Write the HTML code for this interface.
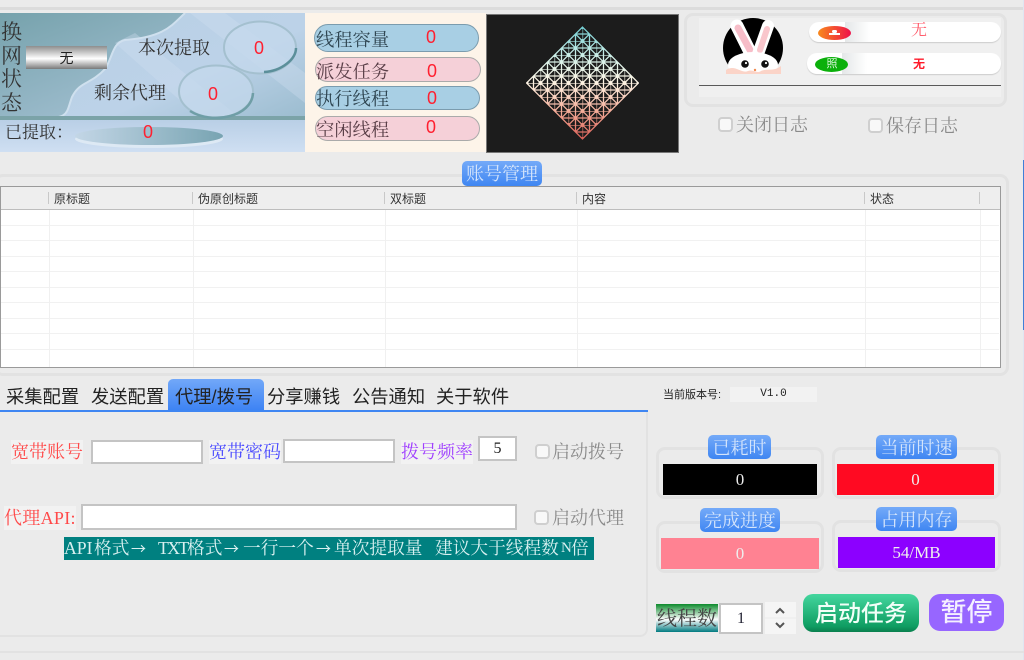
<!DOCTYPE html>
<html><head><meta charset="utf-8"><style>
*{box-sizing:border-box}
html,body{margin:0;padding:0}
body{width:1024px;height:660px;overflow:hidden;background:#ebebeb;position:relative;font-family:"Liberation Serif","Noto Serif CJK SC",serif}
.a{position:absolute;white-space:nowrap}
.s{font-family:"Liberation Sans","Noto Sans CJK SC",sans-serif}
.l{line-height:24px;height:24px;font-size:18px;color:#333}
.p{font-size:18.3px}
.r{color:#ff2030;font-size:18px;font-family:"Liberation Sans",sans-serif;text-align:center;line-height:24px;height:24px}
.pill{position:absolute;border-radius:14px;border:1px solid #8aa}
.gb{position:absolute;border:3px solid #e2e2e2;border-radius:9px}
.tt{position:absolute;background:linear-gradient(#74aaf8,#3f86f2);border-radius:5px;color:#d4e4fb;font-size:18px;text-align:center;height:24px;line-height:26px}
.inp{position:absolute;background:#fff;border:2px solid #c4c4c4}
.v{position:absolute;color:#eee;text-align:center;font-size:17px;line-height:31px;height:31px}
.cb{position:absolute;width:15px;height:15px;border:2px solid #cfcfcf;border-radius:4px;background:#f8f8f8}
.g{color:#8a8a8a;font-size:18px;line-height:24px;height:24px}
.tab{position:absolute;top:385px;font-size:18.3px;line-height:24px;height:24px;color:#222;font-family:"Liberation Sans","Noto Sans CJK SC",sans-serif}
.cell{position:absolute;top:186px;height:182px;width:1px;background:#f0f0f0}
.sep{position:absolute;top:192px;height:12px;width:1px;background:#c8c8c8}
.row{position:absolute;left:1px;width:998px;height:1px;background:#f1f1f1}
.th{position:absolute;top:191px;font-size:12px;line-height:16px;color:#333;font-family:"Liberation Sans","Noto Sans CJK SC",sans-serif}
.lb{position:absolute;font-size:18px;line-height:24px;background:#f2f2f2;white-space:nowrap}
.bn{position:absolute;top:0;line-height:23px;font-size:17.7px;color:#d8f0f0;white-space:nowrap}
.ar{font-family:"Noto Sans CJK SC",sans-serif;font-size:15px}
</style></head><body>

<!-- outer frame lines -->
<div class="a" style="left:0;top:7px;width:1024px;height:3px;background:#dcdcdc"></div>
<div class="a" style="left:1023px;top:0;width:1px;height:660px;background:#dfe6f2"></div>
<div class="a" style="left:1023px;top:160px;width:1px;height:170px;background:#3f7fd8"></div>
<div class="a" style="left:0;top:651px;width:1024px;height:2px;background:#e2e2e2"></div>

<!-- top-left panel -->
<svg class="a" style="left:0;top:13px" width="305" height="139" viewBox="0 0 305 139">
<defs>
<linearGradient id="bg1" x1="0" y1="0" x2="1" y2="1"><stop offset="0" stop-color="#b8cfe4"/><stop offset=".55" stop-color="#bcd2e8"/><stop offset="1" stop-color="#8fb4c6"/></linearGradient>
<linearGradient id="bg2" x1="0" y1="0" x2=".7" y2="1"><stop offset="0" stop-color="#76a2ac"/><stop offset="1" stop-color="#a3c0d2"/></linearGradient>
<linearGradient id="bg3" x1="0" y1="0" x2="0" y2="1"><stop offset="0" stop-color="#b9cfe6"/><stop offset="1" stop-color="#cfdff2"/></linearGradient>
<linearGradient id="el" x1="0" y1="0" x2="1" y2="0"><stop offset="0" stop-color="#c3d6e6"/><stop offset="1" stop-color="#78a4b2"/></linearGradient>
</defs>
<rect width="305" height="139" fill="url(#bg1)"/>
<path d="M185 0C172 12 165 24 125 27C112 30 113 44 105 56C90 72 80 68 72 84C66 100 70 108 40 105L0 105V0Z" fill="url(#bg2)"/>
<path d="M185 0C172 12 165 24 125 27C112 30 113 44 105 56C90 72 80 68 72 84C66 100 70 106 40 105" fill="none" stroke="#cfe0ee" stroke-width="2"/>
<path d="M190 0L305 90V60L225 0ZM115 30L200 105H240L135 20Z" fill="#d0e0f2" opacity=".35"/>
<rect y="103" width="305" height="4" fill="#7ba3a8"/>
<rect y="107" width="305" height="32" fill="url(#bg3)"/>
<ellipse cx="260" cy="34.5" rx="36" ry="26" fill="#c4d8ec" fill-opacity=".75" stroke="#a4c0cf" stroke-width="2"/>
<path d="M264 59C282 58 296 46 296 35" fill="none" stroke="#5b8f9a" stroke-width="2.5"/>
<ellipse cx="216" cy="78.5" rx="37" ry="26" fill="#c4d8ec" fill-opacity=".75" stroke="#a4c0cf" stroke-width="2"/>
<path d="M190 98C212 112 252 104 253 80" fill="none" stroke="#6f9ea6" stroke-width="2.5"/>
<ellipse cx="149" cy="126" rx="74" ry="9" fill="#dde9f4"/>
<ellipse cx="149" cy="123" rx="74" ry="9" fill="url(#el)"/>
</svg>
<div class="a" style="left:1px;top:21px;width:22px;font-size:21px;line-height:23.5px;color:#333;white-space:normal">换网状态</div>
<div class="a s" style="left:26px;top:46px;width:81px;height:23px;background:linear-gradient(#8d8d8d,#fff 55%,#7a7a7a);color:#222;font-size:14px;line-height:24px;text-align:center">无</div>
<div class="a l" style="left:138px;top:36px">本次提取</div>
<div class="a r" style="left:239px;top:36px;width:40px">0</div>
<div class="a l" style="left:94px;top:81px">剩余代理</div>
<div class="a r" style="left:193px;top:82px;width:40px">0</div>
<div class="a" style="left:5px;top:121px;font-size:17px;line-height:24px;color:#333">已提取：</div>
<div class="a r" style="left:128px;top:120px;width:40px">0</div>

<!-- status panel -->
<div class="a" style="left:305px;top:13px;width:181px;height:139px;background:#fdf4e9"></div>
<div class="pill" style="left:314px;top:24px;width:165px;height:28px;background:#a8cfe4;border-color:#7b9cae"></div>
<div class="pill" style="left:315px;top:57px;width:166px;height:25px;background:#f5d0d8;border-color:#aaa"></div>
<div class="pill" style="left:315px;top:86px;width:165px;height:24px;background:#a8cfe4;border-color:#7b9cae"></div>
<div class="pill" style="left:315px;top:116px;width:165px;height:25px;background:#f5d0d8;border-color:#aaa"></div>
<div class="a l p" style="left:316px;top:28px;color:#2f4652">线程容量</div><div class="a r" style="left:411px;top:25px;width:40px">0</div>
<div class="a l p" style="left:316px;top:60px;color:#5a3f48">派发任务</div><div class="a r" style="left:412px;top:59px;width:40px">0</div>
<div class="a l p" style="left:316px;top:87px;color:#2f4652">执行线程</div><div class="a r" style="left:412px;top:86px;width:40px">0</div>
<div class="a l p" style="left:316px;top:118px;color:#5a3f48">空闲线程</div><div class="a r" style="left:411px;top:115px;width:40px">0</div>

<!-- diamond -->
<svg class="a" style="left:486px;top:14px" width="193" height="139" viewBox="0 0 193 139">
<defs>
<linearGradient id="dg" x1="0" y1="0" x2="0" y2="1"><stop offset="0" stop-color="#70ccd2"/><stop offset=".28" stop-color="#d4f2ea"/><stop offset=".5" stop-color="#fff4e4"/><stop offset=".75" stop-color="#f4ac98"/><stop offset="1" stop-color="#d85c54"/></linearGradient>
<pattern id="pt" x="96.5" y="13" width="14" height="14" patternUnits="userSpaceOnUse">
<path d="M0 0H14M0 7H14M0 0V14M7 0V14M0 0L14 14M14 0L0 14" stroke="#fff" stroke-width="1.3" fill="none"/>
<circle cx="0" cy="0" r="2" fill="#fff"/><circle cx="14" cy="0" r="2" fill="#fff"/><circle cx="0" cy="14" r="2" fill="#fff"/><circle cx="14" cy="14" r="2" fill="#fff"/><circle cx="7" cy="7" r="1.8" fill="#fff"/>
</pattern>
<mask id="dm"><path d="M96.5 13L152.5 69L96.5 125L40.5 69Z" fill="url(#pt)" stroke="#fff" stroke-width="1.2"/></mask>
</defs>
<rect x=".5" y=".5" width="192" height="138" fill="#1c1c1c" stroke="#777"/>
<rect x="40" y="12" width="113" height="114" fill="url(#dg)" mask="url(#dm)"/>
</svg>

<!-- user box -->
<div class="gb" style="left:684px;top:13px;width:323px;height:94px"></div>
<div class="a" style="left:699px;top:18px;width:302px;height:79px;background:#f0f0f0"></div>
<svg class="a" style="left:723px;top:18px" width="60" height="56" viewBox="0 0 60 56">
<defs><clipPath id="cc"><rect width="60" height="56"/></clipPath></defs>
<g clip-path="url(#cc)">
<circle cx="30" cy="30" r="30" fill="#000"/>
<path d="M14 8L28 36" stroke="#fff" stroke-width="13" stroke-linecap="round"/>
<path d="M15 10L27 32" stroke="#f7bdc8" stroke-width="7" stroke-linecap="round"/>
<path d="M45 8L35 36" stroke="#fff" stroke-width="12" stroke-linecap="round"/>
<path d="M44 11L37 32" stroke="#f9c6cc" stroke-width="6" stroke-linecap="round"/>
<ellipse cx="30" cy="47" rx="25" ry="13" fill="#fff"/>
<circle cx="22" cy="46" r="3.8" fill="#111"/><circle cx="42" cy="46" r="3.8" fill="#111"/>
<circle cx="23" cy="45" r="1.1" fill="#fff"/><circle cx="43" cy="45" r="1.1" fill="#fff"/>
<path d="M3 52C12 46 18 56 25 53C30 51 34 56 38 53C45 50 50 54 58 48L58 56H3Z" fill="#fbd4c8"/>
<circle cx="32" cy="52" r="1.2" fill="#f08a50"/>
</g></svg>
<div class="a" style="left:809px;top:22px;width:192px;height:20px;background:#fff;border-radius:10px;box-shadow:0 1px 1px #ccc"></div>
<div class="a" style="left:807px;top:53px;width:194px;height:21px;background:#fff;border-radius:10px;box-shadow:0 1px 1px #ccc"></div>
<div class="a" style="left:845px;top:22px;width:25px;height:20px;background:linear-gradient(90deg,#e4e7e8,#fff)"></div>
<div class="a" style="left:842px;top:53px;width:25px;height:21px;background:linear-gradient(90deg,#e4e7e8,#fff)"></div>
<div class="a" style="left:818px;top:26px;width:33px;height:14px;border-radius:50%;background:linear-gradient(90deg,#f88a1c,#ee0f48)"></div>
<div class="a" style="left:829px;top:33px;width:11px;height:2px;background:#fff"></div>
<div class="a" style="left:832px;top:30px;width:5px;height:3px;background:#fff;border-radius:2px"></div>
<div class="a" style="left:815px;top:57px;width:33px;height:15px;border-radius:50%;background:#0bb00b"></div>
<div class="a s" style="left:825px;top:57px;width:14px;font-size:11px;line-height:15px;color:#d8f5d8;text-align:center">照</div>
<div class="a" style="left:905px;top:20px;width:28px;text-align:center;font-size:16px;line-height:22px;color:#ff5a6a">无</div>
<div class="a s" style="left:905px;top:53px;width:28px;text-align:center;font-size:12px;line-height:22px;font-weight:700;color:#ff1a2a">无</div>
<div class="a" style="left:699px;top:85px;width:302px;height:1px;background:#5a5a5a"></div>
<div class="cb" style="left:718px;top:117px"></div><div class="a g" style="left:736px;top:113px">关闭日志</div>
<div class="cb" style="left:868px;top:118px"></div><div class="a g" style="left:886px;top:114px">保存日志</div>

<!-- account group -->
<div class="gb" style="left:-6px;top:174px;width:1015px;height:202px"></div>
<div class="tt" style="left:462px;top:161px;width:80px;height:25px;line-height:27px">账号管理</div>
<div class="a" style="left:0;top:186px;width:1001px;height:182px;background:#fff;border:1px solid #9a9a9a"></div>
<div class="a" style="left:1px;top:187px;width:999px;height:23px;background:#eeeeee;border-bottom:1px solid #bdbdbd"></div>
<div class="row" style="top:225px"></div><div class="row" style="top:240px"></div><div class="row" style="top:256px"></div><div class="row" style="top:271px"></div><div class="row" style="top:287px"></div><div class="row" style="top:302px"></div><div class="row" style="top:318px"></div><div class="row" style="top:333px"></div><div class="row" style="top:349px"></div>
<div class="cell" style="left:49px;top:210px;height:157px"></div><div class="cell" style="left:193px;top:210px;height:157px"></div><div class="cell" style="left:385px;top:210px;height:157px"></div><div class="cell" style="left:577px;top:210px;height:157px"></div><div class="cell" style="left:865px;top:210px;height:157px"></div><div class="cell" style="left:980px;top:210px;height:157px"></div>
<div class="sep" style="left:48px"></div><div class="sep" style="left:192px"></div><div class="sep" style="left:384px"></div><div class="sep" style="left:576px"></div><div class="sep" style="left:864px"></div><div class="sep" style="left:979px"></div>
<div class="th" style="left:54px">原标题</div><div class="th" style="left:198px">伪原创标题</div><div class="th" style="left:390px">双标题</div><div class="th" style="left:582px">内容</div><div class="th" style="left:870px">状态</div>

<!-- tabs -->
<div class="a" style="left:0;top:411px;width:648px;height:226px;border-right:2px solid #e2e2e2;border-bottom:2px solid #e2e2e2;border-bottom-right-radius:8px"></div>
<div class="a" style="left:168px;top:379px;width:96px;height:32px;background:linear-gradient(#72a8f8,#3c82f4);border-radius:5px 5px 0 0"></div>
<div class="a" style="left:0;top:410px;width:648px;height:2px;background:#3f86f2"></div>
<div class="tab" style="left:6px">采集配置</div><div class="tab" style="left:91px">发送配置</div><div class="tab" style="left:175px">代理/拨号</div><div class="tab" style="left:267px">分享赚钱</div><div class="tab" style="left:352px">公告通知</div><div class="tab" style="left:436px">关于软件</div>

<div class="lb" style="left:11px;top:440px;color:#ff4a4a">宽带账号</div>
<div class="inp" style="left:91px;top:440px;width:112px;height:24px"></div>
<div class="lb" style="left:209px;top:440px;color:#4a4aff">宽带密码</div>
<div class="inp" style="left:283px;top:439px;width:112px;height:24px"></div>
<div class="lb" style="left:401px;top:440px;color:#a040ff">拨号频率</div>
<div class="inp" style="left:478px;top:436px;width:39px;height:25px;font-size:16px;line-height:21px;text-align:center;color:#222">5</div>
<div class="cb" style="left:535px;top:444px"></div><div class="a g" style="left:552px;top:440px">启动拨号</div>
<div class="lb" style="left:4px;top:506px;color:#ff4a4a;letter-spacing:.3px">代理API:</div>
<div class="inp" style="left:81px;top:504px;width:436px;height:26px"></div>
<div class="cb" style="left:534px;top:510px"></div><div class="a g" style="left:552px;top:506px">启动代理</div>
<div class="a" style="left:64px;top:537px;width:530px;height:23px;background:#008080;overflow:hidden">
<span class="bn" style="left:0">API</span><span class="bn" style="left:30px">格式</span><span class="bn ar" style="left:67px">→</span><span class="bn" style="left:94px;letter-spacing:-1.6px">TXT</span><span class="bn" style="left:123px">格式</span><span class="bn ar" style="left:160px">→</span><span class="bn" style="left:179px">一行一个</span><span class="bn ar" style="left:252px">→</span><span class="bn" style="left:270px">单次提取量</span><span class="bn" style="left:371px">建议大于线程数</span><span class="bn" style="left:497px;letter-spacing:-3px;font-size:15px">N</span><span class="bn" style="left:507px">倍</span>
</div>

<!-- right side -->
<div class="a s" style="left:663px;top:387px;font-size:11px;line-height:16px;color:#222">当前版本号:</div>
<div class="a" style="left:730px;top:387px;width:87px;height:15px;background:#f2f2f2;font-size:11px;line-height:15px;text-align:center;color:#222;font-family:'Liberation Mono',monospace">V1.0</div>

<div class="gb" style="left:656px;top:447px;width:168px;height:52px"></div>
<div class="gb" style="left:832px;top:447px;width:169px;height:52px"></div>
<div class="gb" style="left:656px;top:521px;width:168px;height:52px"></div>
<div class="gb" style="left:832px;top:520px;width:169px;height:52px"></div>
<div class="tt" style="left:708px;top:435px;width:63px">已耗时</div>
<div class="tt" style="left:876px;top:435px;width:81px">当前时速</div>
<div class="tt" style="left:700px;top:508px;width:80px">完成进度</div>
<div class="tt" style="left:876px;top:507px;width:81px">占用内存</div>
<div class="v" style="left:663px;top:464px;width:154px;background:#000">0</div>
<div class="v" style="left:837px;top:464px;width:157px;background:#ff0a22">0</div>
<div class="v" style="left:661px;top:538px;width:158px;background:#ff8292">0</div>
<div class="v" style="left:838px;top:537px;width:157px;background:#8c00ff">54/MB</div>

<div class="a" style="left:656px;top:604px;width:62px;height:28px;background:linear-gradient(#0c8a2c,#fff 55%,#007a80);color:#444;font-size:20px;line-height:30px;text-align:center">线程数</div>
<div class="inp" style="left:719px;top:603px;width:44px;height:31px;font-size:16px;line-height:27px;text-align:center;color:#223">1</div>
<svg class="a" style="left:765px;top:602px" width="31" height="32" viewBox="0 0 31 32">
<rect width="31" height="32" fill="#f5f5f5"/><path d="M0 16H31" stroke="#ebebeb"/>
<path d="M11 11L15 7L19 11M11 21L15 25L19 21" fill="none" stroke="#555" stroke-width="2"/>
</svg>
<div class="a s" style="left:803px;top:594px;width:116px;height:38px;border-radius:10px;background:linear-gradient(#44d69e,#0f9d62 85%,#0a7f4e);color:#f2fff8;font-size:23px;font-weight:500;line-height:38px;text-align:center">启动任务</div>
<div class="a s" style="left:929px;top:594px;width:75px;height:37px;border-radius:11px;background:#9766ff;color:#f5f0ff;font-size:26px;font-weight:500;line-height:37px;text-align:center">暂停</div>
</body></html>
